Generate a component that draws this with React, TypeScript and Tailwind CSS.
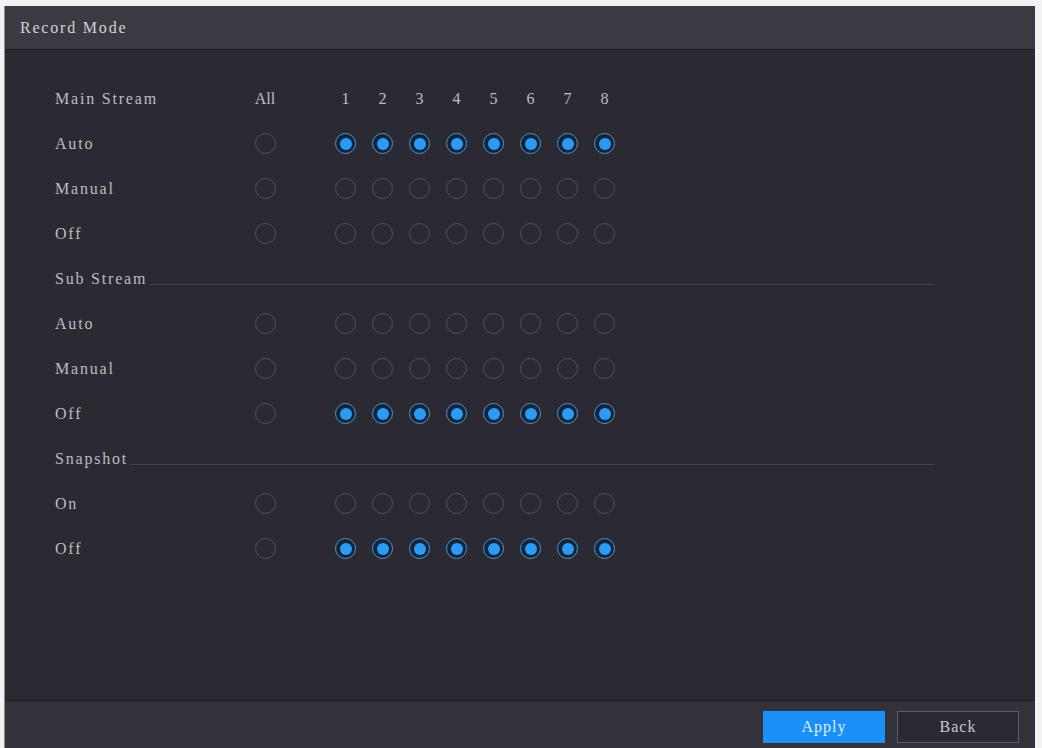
import React from "react";

type Row =
  | { kind: "section"; label: string; line?: boolean }
  | { kind: "radio"; label: string; on: boolean };

const rows: Row[] = [
  { kind: "section", label: "Main Stream" },
  { kind: "radio", label: "Auto", on: true },
  { kind: "radio", label: "Manual", on: false },
  { kind: "radio", label: "Off", on: false },
  { kind: "section", label: "Sub Stream", line: true },
  { kind: "radio", label: "Auto", on: false },
  { kind: "radio", label: "Manual", on: false },
  { kind: "radio", label: "Off", on: true },
  { kind: "section", label: "Snapshot", line: true },
  { kind: "radio", label: "On", on: false },
  { kind: "radio", label: "Off", on: true },
];

const channels = [1, 2, 3, 4, 5, 6, 7, 8];

function Radio({ on }: { on: boolean }) {
  if (on) {
    return (
      <span className="flex h-[21px] w-[21px] items-center justify-center rounded-full border-[1.5px] border-[#4a97d6] bg-[#16243a]">
        <span className="h-[12px] w-[12px] rounded-full bg-[#2b9cf5]" />
      </span>
    );
  }
  return <span className="block h-[21px] w-[21px] rounded-full border-[1.5px] border-[#53525b]" />;
}

export default function App() {
  return (
    <div
      className="h-[748px] w-[1042px] overflow-hidden bg-[#f2f2f2] pl-[4px] pt-[6px]"
      style={{ fontFamily: '"Liberation Serif", "Times New Roman", serif' }}
    >
      <div className="flex h-[742px] w-[1031px] flex-col border-l border-[#8c8c8c]">
        <div className="flex h-[44px] items-center border-b border-[#1e1d24] bg-[#3b3a42] px-[15px] text-[16px] tracking-[1.8px] text-[#d2d2d2]">
          Record Mode
        </div>

        <div className="flex-1 bg-[#2b2a33] pl-[50px] pt-[26px] text-[16px] tracking-[1.8px] text-[#bdbdc0]">
          {rows.map((row, i) => {
            if (row.kind === "section") {
              if (row.line) {
                return (
                  <div key={i} className="flex h-[45px] w-[880px] items-center">
                    <span>{row.label}</span>
                    <span className="ml-[2px] mt-[12px] h-[2px] flex-1 border-t border-b border-t-[#46454e] border-b-[#25242c]" />
                  </div>
                );
              }
              return (
                <div key={i} className="flex h-[45px] items-center">
                  <span className="w-[198px]">{row.label}</span>
                  <span className="w-[24px] text-center tracking-normal">All</span>
                  <span className="w-[50px]" />
                  {channels.map((c) => (
                    <span key={c} className="w-[37px] text-center tracking-normal">
                      {c}
                    </span>
                  ))}
                </div>
              );
            }
            return (
              <div key={i} className="flex h-[45px] items-center">
                <span className="w-[198px]">{row.label}</span>
                <span className="flex w-[24px] justify-center">
                  <Radio on={false} />
                </span>
                <span className="w-[50px]" />
                {channels.map((c) => (
                  <span key={c} className="flex w-[37px] justify-center">
                    <Radio on={row.on} />
                  </span>
                ))}
              </div>
            );
          })}
        </div>

        <div className="flex h-[48px] items-start justify-end gap-[12px] border-t border-[#1f1e25] bg-[#33323b] pr-[16px] pt-[10px] text-[16px] tracking-[1px]">
          <button className="h-[32px] w-[122px] bg-[#1a8ff5] text-[#dceeff]">Apply</button>
          <button className="h-[32px] w-[122px] border border-[#5d5c66] bg-[#2b2a33] text-[#c8c8cc]">Back</button>
        </div>
      </div>
    </div>
  );
}
